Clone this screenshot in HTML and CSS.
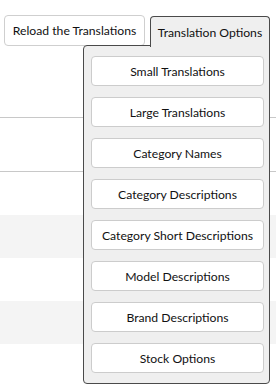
FILE: index.html
```html
<!DOCTYPE html>
<html>
<head>
<meta charset="utf-8">
<link rel="stylesheet" href="styles.css">
</head>
<body>
<div class="toolbar">
  <button class="btn">Reload the Translations</button>
  <div class="dropdown">
    <button class="btn tab">Translation Options</button>
    <div class="menu">
      <button class="item">Small Translations</button>
      <button class="item">Large Translations</button>
      <button class="item">Category Names</button>
      <button class="item">Category Descriptions</button>
      <button class="item">Category Short Descriptions</button>
      <button class="item">Model Descriptions</button>
      <button class="item">Brand Descriptions</button>
      <button class="item">Stock Options</button>
    </div>
  </div>
</div>
<div class="table">
  <div class="row r1"></div>
  <div class="row r2"></div>
  <div class="stripe"></div>
  <div class="stripe alt"></div>
  <div class="stripe"></div>
  <div class="stripe alt"></div>
  <div class="stripe"></div>
</div>
</body>
</html>
```
FILE: styles.css
```css
html, body {
  margin: 0;
  padding: 0;
  background: #fff;
  overflow: hidden;
}
body {
  font-family: Lato, "Open Sans", sans-serif;
  font-size: 12.2px;
  color: #111;
}
.toolbar {
  display: flex;
  justify-content: flex-end;
  align-items: flex-start;
  gap: 5px;
  padding: 15px 6px 0 0;
  height: 31px;
}
.btn {
  font: inherit;
  color: inherit;
  background: #fff;
  border: 1px solid #cfcfcf;
  border-radius: 4px;
  width: 141px;
  height: 31px;
  padding: 0;
  margin: 0;
  white-space: nowrap;
}
.dropdown {
  position: relative;
  margin-top: 1px;
}
.tab {
  position: relative;
  z-index: 2;
  display: block;
  width: 120px;
  height: 31px;
  background: #efefef;
  border: 1px solid #4a4a4a;
  border-bottom: none;
  border-radius: 4px 4px 0 0;
  padding: 0;
}
.menu {
  position: absolute;
  z-index: 1;
  top: 29px;
  right: 0;
  width: 187px;
  box-sizing: border-box;
  background: #efefef;
  border: 1px solid #4a4a4a;
  border-radius: 4px 0 4px 4px;
  padding: 10px 5px 10px 7px;
  display: flex;
  flex-direction: column;
  gap: 11px;
}
.item {
  font: inherit;
  color: inherit;
  height: 30px;
  background: #fff;
  border: 1px solid #cccccc;
  border-radius: 4px;
  margin: 0;
  padding: 0;
  white-space: nowrap;
}
.table {
  display: flex;
  flex-direction: column;
}
.row {
  border-bottom: 1px solid #c8c8c8;
}
.r1 { height: 71px; }
.r2 { height: 53px; }
.stripe { height: 43px; }
.stripe.alt { background: #f4f4f4; }
```
